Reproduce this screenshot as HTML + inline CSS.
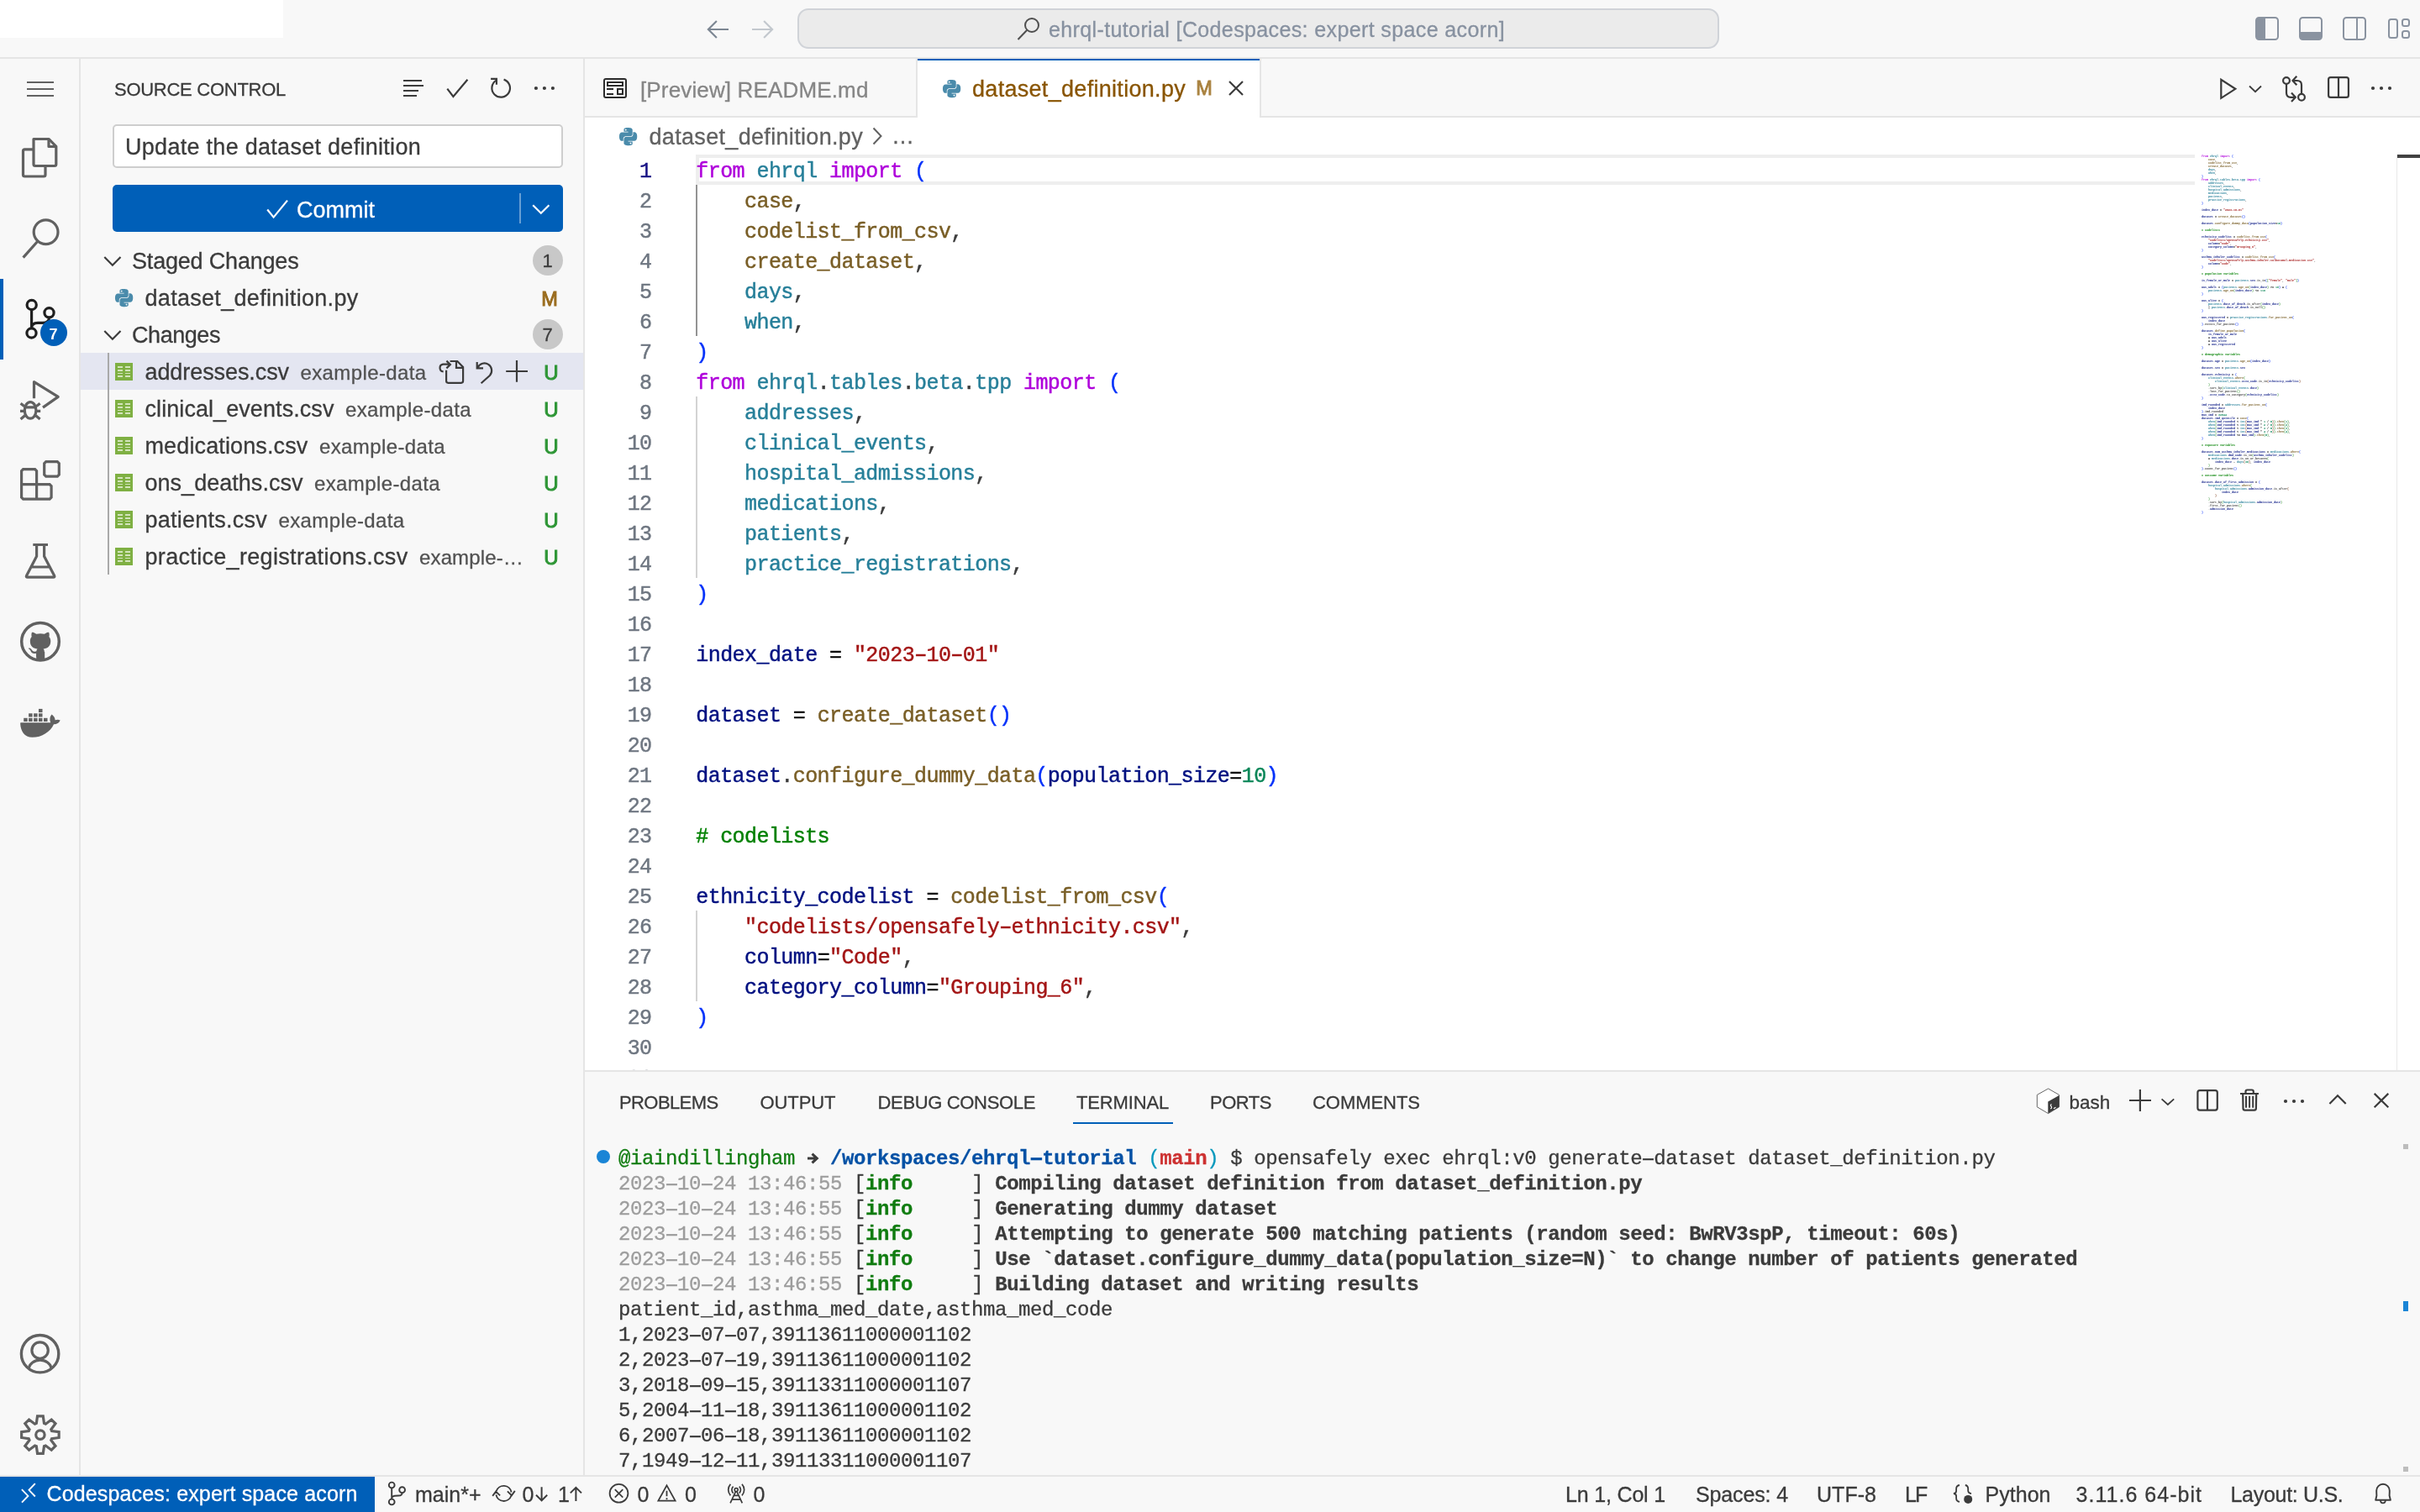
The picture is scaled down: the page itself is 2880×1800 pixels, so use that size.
<!DOCTYPE html>
<html><head><meta charset="utf-8"><title>dataset_definition.py - ehrql-tutorial</title>
<style>
html,body{margin:0;padding:0}
body{width:2880px;height:1800px;position:relative;overflow:hidden;background:#f8f8f8;font-family:'Liberation Sans', sans-serif;-webkit-font-smoothing:antialiased;will-change:transform}
svg{overflow:visible}
.hy{display:inline-block;transform:scaleX(1.6)}
.ht{display:inline-block;transform:scaleX(1.9)}
</style></head><body>
<div style="position:absolute;left:0px;top:0px;width:2880px;height:68px;background:#f8f8f8;"></div><div style="position:absolute;left:0px;top:0px;width:337px;height:45px;background:#ffffff;"></div><div style="position:absolute;left:0px;top:68px;width:2880px;height:2px;background:#e5e5e5;"></div><div style="position:absolute;left:94px;top:70px;width:2px;height:1686px;background:#e5e5e5;"></div><div style="position:absolute;left:694px;top:70px;width:2px;height:1686px;background:#e5e5e5;"></div><div style="position:absolute;left:696px;top:70px;width:2184px;height:68px;background:#f8f8f8;"></div><div style="position:absolute;left:696px;top:138px;width:2184px;height:2px;background:#e5e5e5;"></div><div style="position:absolute;left:696px;top:140px;width:2184px;height:1134px;background:#ffffff;"></div><div style="position:absolute;left:696px;top:1274px;width:2184px;height:2px;background:#e5e5e5;"></div><div style="position:absolute;left:696px;top:1276px;width:2184px;height:480px;background:#f8f8f8;"></div><div style="position:absolute;left:0px;top:1756px;width:2880px;height:2px;background:#e5e5e5;"></div><div style="position:absolute;left:0px;top:1758px;width:2880px;height:42px;background:#f8f8f8;"></div><div style="position:absolute;left:0px;top:1758px;width:446px;height:42px;background:#005fb8;"></div><svg style="position:absolute;left:0px;top:0px;" width="1" height="1" viewBox="0 0 1 1"><path d="M867 35H843.5M852.9 25L842.9 35L852.9 45" fill="none" stroke="#7d8793" stroke-width="2.2"/></svg><svg style="position:absolute;left:0px;top:0px;" width="1" height="1" viewBox="0 0 1 1"><path d="M895 35H918.5M909.1 25L919.1 35L909.1 45" fill="none" stroke="#c3c8ce" stroke-width="2.2"/></svg><div style="position:absolute;left:949px;top:10px;width:1093px;height:44px;border:2px solid #d0d3d8;border-radius:13px;background:#ebebeb"></div><svg style="position:absolute;left:1209px;top:18.5px;" width="30" height="30" viewBox="0 0 30 30"><circle cx="19" cy="11" r="8" fill="none" stroke="#4f4f4f" stroke-width="2"/><path d="M13.3 16.7L2.5 28" stroke="#4f4f4f" stroke-width="2" fill="none"/></svg><span style="position:absolute;left:1248px;top:22.84px;font:400 25px/25px 'Liberation Sans', sans-serif;color:#8791a0;white-space:pre;letter-spacing:0.377px;-webkit-text-stroke:0.3px;">ehrql-tutorial [Codespaces: expert space acorn]</span><svg style="position:absolute;left:2684px;top:20px;" width="28" height="28" viewBox="0 0 28 28"><rect x="1" y="1" width="26" height="26" rx="3.5" fill="none" stroke="#8a93a0" stroke-width="2"/><path d="M1 4.5Q1 1 4.5 1H12V27H4.5Q1 27 1 23.5Z" fill="#8a93a0"/></svg><svg style="position:absolute;left:2736px;top:20px;" width="28" height="28" viewBox="0 0 28 28"><rect x="1" y="1" width="26" height="26" rx="3.5" fill="none" stroke="#8a93a0" stroke-width="2"/><path d="M1 18H27V23.5Q27 27 23.5 27H4.5Q1 27 1 23.5Z" fill="#8a93a0"/></svg><svg style="position:absolute;left:2788px;top:20px;" width="28" height="28" viewBox="0 0 28 28"><rect x="1" y="1" width="26" height="26" rx="3.5" fill="none" stroke="#8a93a0" stroke-width="2"/><path d="M17 1V27" stroke="#8a93a0" stroke-width="2"/></svg><svg style="position:absolute;left:2842px;top:22px;" width="26" height="24" viewBox="0 0 26 24"><rect x="1" y="1" width="10" height="22" rx="2.5" fill="none" stroke="#8a93a0" stroke-width="2"/><rect x="17" y="1" width="8" height="8" rx="2.5" fill="none" stroke="#8a93a0" stroke-width="2"/><rect x="17" y="15" width="8" height="8" rx="2.5" fill="none" stroke="#8a93a0" stroke-width="2"/></svg><div style="position:absolute;left:32px;top:97px;width:32px;height:2px;background:#616161;"></div><div style="position:absolute;left:32px;top:105px;width:32px;height:2px;background:#616161;"></div><div style="position:absolute;left:32px;top:113px;width:32px;height:2px;background:#616161;"></div><svg style="position:absolute;left:0px;top:0px;" width="96" height="1800" viewBox="0 0 96 1800"><path d="M40 165.5H58.2L66.8 174.3V195.5Q66.8 197.5 64.8 197.5H42Q40 197.5 40 195.5Z" fill="none" stroke="#616161" stroke-width="3.2" stroke-linejoin="round" stroke-linecap="butt"/><path d="M58 165.5V174.5H66.8" fill="none" stroke="#616161" stroke-width="3.2" stroke-linejoin="round" stroke-linecap="butt"/><path d="M40 177.8H29.5Q27.5 177.8 27.5 179.8V208Q27.5 210 29.5 210H52Q54 210 54 208V198" fill="none" stroke="#616161" stroke-width="3.2" stroke-linejoin="round" stroke-linecap="butt"/><circle cx="54.6" cy="276.3" r="14.4" fill="none" stroke="#616161" stroke-width="3.2" stroke-linejoin="round" stroke-linecap="butt"/><path d="M44.8 287.2L27.6 306.6" fill="none" stroke="#616161" stroke-width="3.2" stroke-linejoin="round" stroke-linecap="butt"/><circle cx="37.7" cy="363" r="5.6" fill="none" stroke="#1f1f1f" stroke-width="3.2" stroke-linejoin="round" stroke-linecap="butt"/><circle cx="58.5" cy="372.3" r="5.6" fill="none" stroke="#1f1f1f" stroke-width="3.2" stroke-linejoin="round" stroke-linecap="butt"/><circle cx="37.5" cy="396.5" r="5.6" fill="none" stroke="#1f1f1f" stroke-width="3.2" stroke-linejoin="round" stroke-linecap="butt"/><path d="M37.6 368.6V390.9M58.5 377.9Q58.5 384.3 51 384.3H45Q37.6 384.3 37.6 390.5" fill="none" stroke="#1f1f1f" stroke-width="3.2" stroke-linejoin="round" stroke-linecap="butt"/><path d="M40.5 474.3V454.6L69.2 472.4L51 485.1" fill="none" stroke="#616161" stroke-width="3.2" stroke-linejoin="round" stroke-linecap="butt"/><ellipse cx="36.1" cy="488.4" rx="6.8" ry="9.8" fill="none" stroke="#616161" stroke-width="3.2" stroke-linejoin="round" stroke-linecap="butt"/><path d="M28.5 484.9H43.7M24.6 480.2L28.7 483.5M47.6 480.2L43.5 483.5M24 489.4H28.8M48.2 489.4H43.4M24.6 498.9L29.6 494.7M47.6 498.9L42.6 494.7" fill="none" stroke="#616161" stroke-width="3.2" stroke-linejoin="round" stroke-linecap="butt"/><path d="M25.6 576.7V560.6L27.6 558.6H41.6L43.6 560.6V576.7H59.1L61.1 578.7V592.2L59.1 594.2H27.6L25.6 592.2ZM25.6 576.7H43.6V594.2" fill="none" stroke="#616161" stroke-width="3.2" stroke-linejoin="miter" stroke-linecap="butt"/><path d="M54.7 549.7H68.3L70.3 551.7V565.1L68.3 567.1H54.7L52.7 565.1V551.7Z" fill="none" stroke="#616161" stroke-width="3.2" stroke-linejoin="miter" stroke-linecap="butt"/><path d="M39.3 648.5H57M43.6 649V662.2L31.6 685.2Q30.6 687.2 32.8 687.2H63.4Q65.6 687.2 64.6 685.2L52.6 662.2V649M37.5 675H58.7" fill="none" stroke="#616161" stroke-width="3.2" stroke-linejoin="round" stroke-linecap="butt"/><circle cx="48" cy="763.8" r="22.3" fill="none" stroke="#616161" stroke-width="3.5" stroke-linejoin="round" stroke-linecap="butt"/><g transform="translate(28.8 744.9) scale(2.4)" fill="#616161"><path d="M5.47 15.59c.4.07.55-.17.55-.38 0-.19-.01-.82-.01-1.49-2.01.37-2.53-.49-2.69-.94-.09-.23-.48-.94-.82-1.13-.28-.15-.68-.52-.01-.53.63-.01 1.08.58 1.23.82.72 1.21 1.87.87 2.33.66.07-.52.28-.87.51-1.07-1.78-.2-3.64-.89-3.64-3.95 0-.87.31-1.59.82-2.15-.08-.2-.36-1.02.08-2.12 0 0 .67-.21 2.2.82.64-.18 1.32-.27 2-.27.68 0 1.36.09 2 .27 1.53-1.04 2.2-.82 2.2-.82.44 1.1.16 1.92.08 2.12.51.56.82 1.27.82 2.15 0 3.07-1.87 3.75-3.65 3.95.29.25.54.73.54 1.48 0 1.07-.01 1.93-.01 2.2 0 .21.15.46.55.38z"/></g><rect x="43.2" y="776" width="10" height="11" fill="#616161"/><path d="M24.6 860.3H60.2Q58 855 61.5 850.6Q65.4 853.4 65.6 857.2Q69 856 71.7 857.4Q69.5 862.2 64 862.2C60 871 50 877.8 38.5 877.8C29 877.8 24.6 870 24.2 862Q24.1 860.3 24.6 860.3Z" fill="#616161"/><rect x="28.2" y="854.8" width="4.5" height="4.2" fill="#616161"/><rect x="34.1" y="854.8" width="4.5" height="4.2" fill="#616161"/><rect x="40.1" y="854.8" width="4.5" height="4.2" fill="#616161"/><rect x="46" y="854.8" width="4.5" height="4.2" fill="#616161"/><rect x="52" y="854.8" width="4.5" height="4.2" fill="#616161"/><rect x="34.1" y="849.3" width="4.5" height="4.2" fill="#616161"/><rect x="40.1" y="849.3" width="4.5" height="4.2" fill="#616161"/><rect x="46" y="849.3" width="4.5" height="4.2" fill="#616161"/><rect x="46" y="843.9" width="4.5" height="4.2" fill="#616161"/><circle cx="47.6" cy="1611.7" r="22.2" fill="none" stroke="#616161" stroke-width="3.4" stroke-linejoin="round" stroke-linecap="butt"/><circle cx="47.6" cy="1607.6" r="9.7" fill="none" stroke="#616161" stroke-width="3.2" stroke-linejoin="round" stroke-linecap="butt"/><path d="M34.3 1629A13.5 11.2 0 0 1 61.1 1629" fill="none" stroke="#616161" stroke-width="3.2" stroke-linejoin="round" stroke-linecap="butt"/></svg><div style="position:absolute;left:48px;top:380px;width:32px;height:32px;border-radius:16px;background:#005fb8"></div><span style="position:absolute;left:58.5px;top:388.76px;font:700 18px/18px 'Liberation Sans', sans-serif;color:#ffffff;white-space:pre;letter-spacing:0.984px;-webkit-text-stroke:0px;">7</span><svg style="position:absolute;left:0px;top:0px;" width="96" height="1800" viewBox="0 0 96 1800"><path d="M43.30 1694.45L44.54 1685.85L51.26 1685.85L52.50 1694.45L54.30 1695.20L61.25 1689.99L66.01 1694.75L60.80 1701.70L61.55 1703.50L70.15 1704.74L70.15 1711.46L61.55 1712.70L60.80 1714.50L66.01 1721.45L61.25 1726.21L54.30 1721.00L52.50 1721.75L51.26 1730.35L44.54 1730.35L43.30 1721.75L41.50 1721.00L34.55 1726.21L29.79 1721.45L35.00 1714.50L34.25 1712.70L25.65 1711.46L25.65 1704.74L34.25 1703.50L35.00 1701.70L29.79 1694.75L34.55 1689.99L41.50 1695.20Z" fill="none" stroke="#616161" stroke-width="3.2" stroke-linejoin="miter" stroke-linecap="butt"/><circle cx="47.9" cy="1708.1" r="5.2" fill="none" stroke="#616161" stroke-width="3.2" stroke-linejoin="round" stroke-linecap="butt"/></svg><div style="position:absolute;left:0px;top:332px;width:4px;height:96px;background:#005fb8;"></div><span style="position:absolute;left:136px;top:96.38px;font:400 22px/22px 'Liberation Sans', sans-serif;color:#3b3b3b;white-space:pre;letter-spacing:-0.271px;-webkit-text-stroke:0.3px;">SOURCE CONTROL</span><div style="position:absolute;left:134px;top:148px;width:532px;height:48px;border:2px solid #cecece;border-radius:5px;background:#fff"></div><span style="position:absolute;left:149px;top:161.64px;font:400 27px/27px 'Liberation Sans', sans-serif;color:#3b3b3b;white-space:pre;letter-spacing:0.284px;-webkit-text-stroke:0.3px;">Update the dataset definition</span><div style="position:absolute;left:134px;top:220px;width:536px;height:56px;border-radius:5px;background:#005fb8"></div><div style="position:absolute;left:618px;top:230px;width:2px;height:36px;background:rgba(255,255,255,0.4);"></div><span style="position:absolute;left:353px;top:236.64px;font:400 27px/27px 'Liberation Sans', sans-serif;color:#ffffff;white-space:pre;letter-spacing:0.000px;-webkit-text-stroke:0.3px;">Commit</span><span style="position:absolute;left:157px;top:297.64px;font:400 27px/27px 'Liberation Sans', sans-serif;color:#3b3b3b;white-space:pre;letter-spacing:-0.190px;-webkit-text-stroke:0.3px;">Staged Changes</span><span style="position:absolute;left:172.5px;top:341.64px;font:400 27px/27px 'Liberation Sans', sans-serif;color:#3b3b3b;white-space:pre;letter-spacing:0.301px;-webkit-text-stroke:0.3px;">dataset_definition.py</span><span style="position:absolute;left:157px;top:385.64px;font:400 27px/27px 'Liberation Sans', sans-serif;color:#3b3b3b;white-space:pre;letter-spacing:-0.442px;-webkit-text-stroke:0.3px;">Changes</span><div style="position:absolute;left:96px;top:420px;width:598px;height:44px;background:#e4e6f1;"></div><div style="position:absolute;left:128px;top:420px;width:2px;height:264px;background:#a9a9a9;"></div><span style="position:absolute;left:172.5px;top:429.64px;font:400 27px/27px 'Liberation Sans', sans-serif;color:#3b3b3b;white-space:pre;letter-spacing:-0.083px;-webkit-text-stroke:0.3px;">addresses.csv</span><span style="position:absolute;left:357.5px;top:432.18px;font:400 24px/24px 'Liberation Sans', sans-serif;color:#525252;white-space:pre;letter-spacing:0.382px;-webkit-text-stroke:0.3px;">example-data</span><span style="position:absolute;left:647.3px;top:432.18px;font:400 24px/24px 'Liberation Sans', sans-serif;color:#2e9636;white-space:pre;letter-spacing:-1.844px;-webkit-text-stroke:0.3px;-webkit-text-stroke:1px #2e9636;">U</span><span style="position:absolute;left:172.5px;top:473.64px;font:400 27px/27px 'Liberation Sans', sans-serif;color:#3b3b3b;white-space:pre;letter-spacing:0.074px;-webkit-text-stroke:0.3px;">clinical_events.csv</span><span style="position:absolute;left:411.0px;top:476.18px;font:400 24px/24px 'Liberation Sans', sans-serif;color:#525252;white-space:pre;letter-spacing:0.382px;-webkit-text-stroke:0.3px;">example-data</span><span style="position:absolute;left:647.3px;top:476.18px;font:400 24px/24px 'Liberation Sans', sans-serif;color:#2e9636;white-space:pre;letter-spacing:-1.844px;-webkit-text-stroke:0.3px;-webkit-text-stroke:1px #2e9636;">U</span><span style="position:absolute;left:172.5px;top:517.64px;font:400 27px/27px 'Liberation Sans', sans-serif;color:#3b3b3b;white-space:pre;letter-spacing:0.128px;-webkit-text-stroke:0.3px;">medications.csv</span><span style="position:absolute;left:380.0px;top:520.18px;font:400 24px/24px 'Liberation Sans', sans-serif;color:#525252;white-space:pre;letter-spacing:0.382px;-webkit-text-stroke:0.3px;">example-data</span><span style="position:absolute;left:647.3px;top:520.18px;font:400 24px/24px 'Liberation Sans', sans-serif;color:#2e9636;white-space:pre;letter-spacing:-1.844px;-webkit-text-stroke:0.3px;-webkit-text-stroke:1px #2e9636;">U</span><span style="position:absolute;left:172.5px;top:561.64px;font:400 27px/27px 'Liberation Sans', sans-serif;color:#3b3b3b;white-space:pre;letter-spacing:0.027px;-webkit-text-stroke:0.3px;">ons_deaths.csv</span><span style="position:absolute;left:374.0px;top:564.18px;font:400 24px/24px 'Liberation Sans', sans-serif;color:#525252;white-space:pre;letter-spacing:0.382px;-webkit-text-stroke:0.3px;">example-data</span><span style="position:absolute;left:647.3px;top:564.18px;font:400 24px/24px 'Liberation Sans', sans-serif;color:#2e9636;white-space:pre;letter-spacing:-1.844px;-webkit-text-stroke:0.3px;-webkit-text-stroke:1px #2e9636;">U</span><span style="position:absolute;left:172.5px;top:605.64px;font:400 27px/27px 'Liberation Sans', sans-serif;color:#3b3b3b;white-space:pre;letter-spacing:0.243px;-webkit-text-stroke:0.3px;">patients.csv</span><span style="position:absolute;left:331.5px;top:608.18px;font:400 24px/24px 'Liberation Sans', sans-serif;color:#525252;white-space:pre;letter-spacing:0.382px;-webkit-text-stroke:0.3px;">example-data</span><span style="position:absolute;left:647.3px;top:608.18px;font:400 24px/24px 'Liberation Sans', sans-serif;color:#2e9636;white-space:pre;letter-spacing:-1.844px;-webkit-text-stroke:0.3px;-webkit-text-stroke:1px #2e9636;">U</span><span style="position:absolute;left:172.5px;top:649.64px;font:400 27px/27px 'Liberation Sans', sans-serif;color:#3b3b3b;white-space:pre;letter-spacing:0.322px;-webkit-text-stroke:0.3px;">practice_registrations.csv</span><span style="position:absolute;left:499.0px;top:652.18px;font:400 24px/24px 'Liberation Sans', sans-serif;color:#525252;white-space:pre;letter-spacing:0.142px;-webkit-text-stroke:0.3px;">example-…</span><span style="position:absolute;left:647.3px;top:652.18px;font:400 24px/24px 'Liberation Sans', sans-serif;color:#2e9636;white-space:pre;letter-spacing:-1.844px;-webkit-text-stroke:0.3px;-webkit-text-stroke:1px #2e9636;">U</span><span style="position:absolute;left:644.3px;top:344.61px;font:400 23.5px/23.5px 'Liberation Sans', sans-serif;color:#9a6c1e;white-space:pre;letter-spacing:-1.078px;-webkit-text-stroke:0.3px;-webkit-text-stroke:1px #9a6c1e;">M</span><div style="position:absolute;left:634px;top:292px;width:36px;height:36px;border-radius:18px;background:#c8c8c8"></div><span style="position:absolute;left:645.5px;top:300.38px;font:400 22px/22px 'Liberation Sans', sans-serif;color:#3b3b3b;white-space:pre;letter-spacing:0.750px;-webkit-text-stroke:0.3px;">1</span><div style="position:absolute;left:634px;top:380px;width:36px;height:36px;border-radius:18px;background:#c8c8c8"></div><span style="position:absolute;left:645.5px;top:388.38px;font:400 22px/22px 'Liberation Sans', sans-serif;color:#3b3b3b;white-space:pre;letter-spacing:0.750px;-webkit-text-stroke:0.3px;">7</span><svg style="position:absolute;left:0px;top:0px;" width="1" height="1" viewBox="0 0 1 1"><path d="M480 96H502M480 102H504M480 108H498M480 114H496" fill="none" stroke="#3b3b3b" stroke-width="2.2" stroke-linejoin="miter" stroke-linecap="butt"/><path d="M532.3 105.7L539.4 115L556.4 94.8" fill="none" stroke="#3b3b3b" stroke-width="2.2" stroke-linejoin="miter" stroke-linecap="butt"/><path d="M599.6 94.6A10.8 10.8 0 1 1 590.6 95.6" fill="none" stroke="#3b3b3b" stroke-width="2.2" stroke-linejoin="miter" stroke-linecap="butt"/><path d="M584.1 93.9H590.9V100.7" fill="none" stroke="#3b3b3b" stroke-width="2.2" stroke-linejoin="miter" stroke-linecap="butt"/></svg><svg style="position:absolute;left:0px;top:0px;" width="1" height="1" viewBox="0 0 1 1"><circle cx="637.9" cy="105" r="2.1" fill="#3b3b3b"/><circle cx="647.9" cy="105" r="2.1" fill="#3b3b3b"/><circle cx="657.9" cy="105" r="2.1" fill="#3b3b3b"/></svg><svg style="position:absolute;left:0px;top:0px;" width="1" height="1" viewBox="0 0 1 1"><path d="M318.2 249.5L325.6 258.6L342 238.6" fill="none" stroke="#fff" stroke-width="2.2" stroke-linejoin="miter" stroke-linecap="butt"/></svg><svg style="position:absolute;left:0px;top:0px;" width="1" height="1" viewBox="0 0 1 1"><path d="M634.1999999999999 244.2L643.8 253.8L653.4 244.2" fill="none" stroke="#fff" stroke-width="2.2" stroke-linejoin="miter" stroke-linecap="butt"/></svg><svg style="position:absolute;left:0px;top:0px;" width="1" height="1" viewBox="0 0 1 1"><path d="M124.30000000000001 305.95L133.9 315.65000000000003L143.5 305.95" fill="none" stroke="#3b3b3b" stroke-width="2.2" stroke-linejoin="miter" stroke-linecap="butt"/></svg><svg style="position:absolute;left:0px;top:0px;" width="1" height="1" viewBox="0 0 1 1"><path d="M124.30000000000001 393.95L133.9 403.65000000000003L143.5 393.95" fill="none" stroke="#3b3b3b" stroke-width="2.2" stroke-linejoin="miter" stroke-linecap="butt"/></svg><svg style="position:absolute;left:137px;top:344px" width="21.2" height="21.2" viewBox="0 0 24 24"><path d="M14.25.18l.9.2.73.26.59.3.45.32.34.34.25.34.16.33.1.3.04.26.02.2-.01.13V8.5l-.05.63-.13.55-.21.46-.26.38-.3.31-.33.25-.35.19-.35.14-.33.1-.3.07-.26.04-.21.02H8.77l-.69.05-.59.14-.5.22-.41.27-.33.32-.27.35-.2.36-.15.37-.1.35-.07.32-.04.27-.02.21v3.06H3.17l-.21-.03-.28-.07-.32-.12-.35-.18-.36-.26-.36-.36-.35-.46-.32-.59-.28-.73-.21-.88-.14-1.05-.05-1.23.06-1.22.16-1.04.24-.87.32-.71.36-.57.4-.44.42-.33.42-.24.4-.16.36-.1.32-.05.24-.01h.16l.06.01h8.16v-.83H6.18l-.01-2.75-.02-.37.05-.34.11-.31.17-.28.25-.26.31-.23.38-.2.44-.18.51-.15.58-.12.64-.1.71-.06.77-.04.84-.02 1.27.05zm-6.3 1.98l-.23.33-.08.41.08.41.23.34.33.22.41.09.41-.09.33-.22.23-.34.08-.41-.08-.41-.23-.33-.33-.22-.41-.09-.41.09zm13.09 3.95l.28.06.32.12.35.18.36.27.36.35.35.47.32.59.28.73.21.88.14 1.04.05 1.23-.06 1.23-.16 1.04-.24.86-.32.71-.36.57-.4.45-.42.33-.42.24-.4.16-.36.09-.32.05-.24.02-.16-.01h-8.22v.82h5.84l.01 2.76.02.36-.05.34-.11.31-.17.29-.25.25-.31.24-.38.2-.44.17-.51.15-.58.13-.64.09-.71.07-.77.04-.84.01-1.27-.04-1.07-.14-.9-.2-.73-.25-.59-.3-.45-.33-.34-.34-.25-.34-.16-.33-.1-.3-.04-.25-.02-.2.01-.13v-5.34l.05-.64.13-.54.21-.46.26-.38.3-.32.33-.24.35-.2.35-.14.33-.1.3-.06.26-.04.21-.02.13-.01h5.84l.69-.05.59-.14.5-.21.41-.28.33-.32.27-.35.2-.36.15-.36.1-.35.07-.32.04-.28.02-.21V6.07h2.09l.14.01zm-6.47 14.25l-.23.33-.08.41.08.41.23.33.33.23.41.08.41-.08.33-.23.23-.33.08-.41-.08-.41-.23-.33-.33-.23-.41-.08-.41.08z" fill="#4a8bab"/></svg><div style="position:absolute;left:136.7px;top:432px;width:21.7px;height:21.2px;background:#7fb043;"></div><div style="position:absolute;left:140.1px;top:436.3px;width:6px;height:1.9px;background:#d2e4ba;"></div><div style="position:absolute;left:149px;top:436.3px;width:6.1px;height:1.9px;background:#d2e4ba;"></div><div style="position:absolute;left:140.1px;top:439.95px;width:6px;height:1.9px;background:#d2e4ba;"></div><div style="position:absolute;left:149px;top:439.95px;width:6.1px;height:1.9px;background:#d2e4ba;"></div><div style="position:absolute;left:140.1px;top:443.6px;width:6px;height:1.9px;background:#d2e4ba;"></div><div style="position:absolute;left:149px;top:443.6px;width:6.1px;height:1.9px;background:#d2e4ba;"></div><div style="position:absolute;left:140.1px;top:447.25px;width:6px;height:1.9px;background:#d2e4ba;"></div><div style="position:absolute;left:149px;top:447.25px;width:6.1px;height:1.9px;background:#d2e4ba;"></div><div style="position:absolute;left:136.7px;top:476px;width:21.7px;height:21.2px;background:#7fb043;"></div><div style="position:absolute;left:140.1px;top:480.3px;width:6px;height:1.9px;background:#d2e4ba;"></div><div style="position:absolute;left:149px;top:480.3px;width:6.1px;height:1.9px;background:#d2e4ba;"></div><div style="position:absolute;left:140.1px;top:483.95px;width:6px;height:1.9px;background:#d2e4ba;"></div><div style="position:absolute;left:149px;top:483.95px;width:6.1px;height:1.9px;background:#d2e4ba;"></div><div style="position:absolute;left:140.1px;top:487.6px;width:6px;height:1.9px;background:#d2e4ba;"></div><div style="position:absolute;left:149px;top:487.6px;width:6.1px;height:1.9px;background:#d2e4ba;"></div><div style="position:absolute;left:140.1px;top:491.25px;width:6px;height:1.9px;background:#d2e4ba;"></div><div style="position:absolute;left:149px;top:491.25px;width:6.1px;height:1.9px;background:#d2e4ba;"></div><div style="position:absolute;left:136.7px;top:520px;width:21.7px;height:21.2px;background:#7fb043;"></div><div style="position:absolute;left:140.1px;top:524.3px;width:6px;height:1.9px;background:#d2e4ba;"></div><div style="position:absolute;left:149px;top:524.3px;width:6.1px;height:1.9px;background:#d2e4ba;"></div><div style="position:absolute;left:140.1px;top:527.9499999999999px;width:6px;height:1.9px;background:#d2e4ba;"></div><div style="position:absolute;left:149px;top:527.9499999999999px;width:6.1px;height:1.9px;background:#d2e4ba;"></div><div style="position:absolute;left:140.1px;top:531.5999999999999px;width:6px;height:1.9px;background:#d2e4ba;"></div><div style="position:absolute;left:149px;top:531.5999999999999px;width:6.1px;height:1.9px;background:#d2e4ba;"></div><div style="position:absolute;left:140.1px;top:535.25px;width:6px;height:1.9px;background:#d2e4ba;"></div><div style="position:absolute;left:149px;top:535.25px;width:6.1px;height:1.9px;background:#d2e4ba;"></div><div style="position:absolute;left:136.7px;top:564px;width:21.7px;height:21.2px;background:#7fb043;"></div><div style="position:absolute;left:140.1px;top:568.3px;width:6px;height:1.9px;background:#d2e4ba;"></div><div style="position:absolute;left:149px;top:568.3px;width:6.1px;height:1.9px;background:#d2e4ba;"></div><div style="position:absolute;left:140.1px;top:571.9499999999999px;width:6px;height:1.9px;background:#d2e4ba;"></div><div style="position:absolute;left:149px;top:571.9499999999999px;width:6.1px;height:1.9px;background:#d2e4ba;"></div><div style="position:absolute;left:140.1px;top:575.5999999999999px;width:6px;height:1.9px;background:#d2e4ba;"></div><div style="position:absolute;left:149px;top:575.5999999999999px;width:6.1px;height:1.9px;background:#d2e4ba;"></div><div style="position:absolute;left:140.1px;top:579.25px;width:6px;height:1.9px;background:#d2e4ba;"></div><div style="position:absolute;left:149px;top:579.25px;width:6.1px;height:1.9px;background:#d2e4ba;"></div><div style="position:absolute;left:136.7px;top:608px;width:21.7px;height:21.2px;background:#7fb043;"></div><div style="position:absolute;left:140.1px;top:612.3px;width:6px;height:1.9px;background:#d2e4ba;"></div><div style="position:absolute;left:149px;top:612.3px;width:6.1px;height:1.9px;background:#d2e4ba;"></div><div style="position:absolute;left:140.1px;top:615.9499999999999px;width:6px;height:1.9px;background:#d2e4ba;"></div><div style="position:absolute;left:149px;top:615.9499999999999px;width:6.1px;height:1.9px;background:#d2e4ba;"></div><div style="position:absolute;left:140.1px;top:619.5999999999999px;width:6px;height:1.9px;background:#d2e4ba;"></div><div style="position:absolute;left:149px;top:619.5999999999999px;width:6.1px;height:1.9px;background:#d2e4ba;"></div><div style="position:absolute;left:140.1px;top:623.25px;width:6px;height:1.9px;background:#d2e4ba;"></div><div style="position:absolute;left:149px;top:623.25px;width:6.1px;height:1.9px;background:#d2e4ba;"></div><div style="position:absolute;left:136.7px;top:652px;width:21.7px;height:21.2px;background:#7fb043;"></div><div style="position:absolute;left:140.1px;top:656.3px;width:6px;height:1.9px;background:#d2e4ba;"></div><div style="position:absolute;left:149px;top:656.3px;width:6.1px;height:1.9px;background:#d2e4ba;"></div><div style="position:absolute;left:140.1px;top:659.9499999999999px;width:6px;height:1.9px;background:#d2e4ba;"></div><div style="position:absolute;left:149px;top:659.9499999999999px;width:6.1px;height:1.9px;background:#d2e4ba;"></div><div style="position:absolute;left:140.1px;top:663.5999999999999px;width:6px;height:1.9px;background:#d2e4ba;"></div><div style="position:absolute;left:149px;top:663.5999999999999px;width:6.1px;height:1.9px;background:#d2e4ba;"></div><div style="position:absolute;left:140.1px;top:667.25px;width:6px;height:1.9px;background:#d2e4ba;"></div><div style="position:absolute;left:149px;top:667.25px;width:6.1px;height:1.9px;background:#d2e4ba;"></div><svg style="position:absolute;left:0px;top:0px;" width="1" height="1" viewBox="0 0 1 1"><path d="M531.1 440.7V453.6Q531.1 455.8 533.3 455.8H548.9Q551.1 455.8 551.1 453.6V436.9L544.3 430H535.6M543 430.4V437.9H551.1" fill="none" stroke="#3b3b3b" stroke-width="2.2" stroke-linejoin="miter" stroke-linecap="butt"/><path d="M527.6 442.4A4.5 4.4 0 0 1 527.2 433.7H535.6M531.4 429.6L535.9 433.9L531.4 438.4" fill="none" stroke="#3b3b3b" stroke-width="2.2" stroke-linejoin="miter" stroke-linecap="butt"/><path d="M567.7 431.1V438.4H575M568.6 437.4A8.7 8.7 0 1 1 582.9 447L572.6 456.2" fill="none" stroke="#3b3b3b" stroke-width="2.2" stroke-linejoin="miter" stroke-linecap="butt"/><path d="M615 429.1V454.8M602.2 442H628" fill="none" stroke="#3b3b3b" stroke-width="2.2" stroke-linejoin="miter" stroke-linecap="butt"/></svg><div style="position:absolute;left:1090px;top:70px;width:2px;height:68px;background:#e5e5e5;"></div><div style="position:absolute;left:1092px;top:70px;width:407px;height:70px;background:#ffffff;"></div><div style="position:absolute;left:1092px;top:70px;width:407px;height:2px;background:#005fb8;"></div><div style="position:absolute;left:1499px;top:70px;width:2px;height:68px;background:#e5e5e5;"></div><span style="position:absolute;left:762px;top:93.99px;font:400 26px/26px 'Liberation Sans', sans-serif;color:#868686;white-space:pre;letter-spacing:0.146px;-webkit-text-stroke:0.3px;">[Preview] README.md</span><span style="position:absolute;left:1157px;top:93.14px;font:400 27px/27px 'Liberation Sans', sans-serif;color:#895503;white-space:pre;letter-spacing:0.301px;-webkit-text-stroke:0.3px;">dataset_definition.py</span><span style="position:absolute;left:1423.2px;top:93.91px;font:400 23.5px/23.5px 'Liberation Sans', sans-serif;color:#a9823f;white-space:pre;letter-spacing:-1.078px;-webkit-text-stroke:0.3px;-webkit-text-stroke:0.9px #a9823f;">M</span><span style="position:absolute;left:772.5px;top:149.64px;font:400 27px/27px 'Liberation Sans', sans-serif;color:#616161;white-space:pre;letter-spacing:0.324px;-webkit-text-stroke:0.3px;">dataset_definition.py</span><span style="position:absolute;left:1061px;top:149.14px;font:400 27px/27px 'Liberation Sans', sans-serif;color:#616161;white-space:pre;letter-spacing:-9.000px;-webkit-text-stroke:0.3px;">…</span><div style="position:absolute;left:828px;top:184px;width:1780px;height:28px;border:4px solid #eeeeee;border-right:0"></div><div style="position:absolute;left:828px;top:220px;width:2px;height:180px;background:#939393;"></div><div style="position:absolute;left:828px;top:472px;width:2px;height:216px;background:#d3d3d3;"></div><div style="position:absolute;left:828px;top:1084px;width:2px;height:108px;background:#d3d3d3;"></div><div style="position:absolute;left:696px;top:184px;width:1916px;height:1090px;overflow:hidden;font:400 25px/36px 'Liberation Mono', monospace;letter-spacing:-0.572px;white-space:pre;-webkit-text-stroke:0.45px"><div style="position:absolute;left:0;top:3.33px;width:79.5px;text-align:right;color:#171184;height:36px">1</div><div style="position:absolute;left:132.3px;top:3.33px;height:36px"><span style="color:#af00db">from</span> <span style="color:#267f99">ehrql</span> <span style="color:#af00db">import</span> <span style="color:#0431fa">(</span></div><div style="position:absolute;left:0;top:39.33px;width:79.5px;text-align:right;color:#6e7681;height:36px">2</div><div style="position:absolute;left:132.3px;top:39.33px;height:36px">    <span style="color:#795e26">case</span><span style="color:#3b3b3b">,</span></div><div style="position:absolute;left:0;top:75.33px;width:79.5px;text-align:right;color:#6e7681;height:36px">3</div><div style="position:absolute;left:132.3px;top:75.33px;height:36px">    <span style="color:#795e26">codelist_from_csv</span><span style="color:#3b3b3b">,</span></div><div style="position:absolute;left:0;top:111.33px;width:79.5px;text-align:right;color:#6e7681;height:36px">4</div><div style="position:absolute;left:132.3px;top:111.33px;height:36px">    <span style="color:#795e26">create_dataset</span><span style="color:#3b3b3b">,</span></div><div style="position:absolute;left:0;top:147.33px;width:79.5px;text-align:right;color:#6e7681;height:36px">5</div><div style="position:absolute;left:132.3px;top:147.33px;height:36px">    <span style="color:#267f99">days</span><span style="color:#3b3b3b">,</span></div><div style="position:absolute;left:0;top:183.33px;width:79.5px;text-align:right;color:#6e7681;height:36px">6</div><div style="position:absolute;left:132.3px;top:183.33px;height:36px">    <span style="color:#267f99">when</span><span style="color:#3b3b3b">,</span></div><div style="position:absolute;left:0;top:219.33px;width:79.5px;text-align:right;color:#6e7681;height:36px">7</div><div style="position:absolute;left:132.3px;top:219.33px;height:36px"><span style="color:#0431fa">)</span></div><div style="position:absolute;left:0;top:255.33px;width:79.5px;text-align:right;color:#6e7681;height:36px">8</div><div style="position:absolute;left:132.3px;top:255.33px;height:36px"><span style="color:#af00db">from</span> <span style="color:#267f99">ehrql</span><span style="color:#3b3b3b">.</span><span style="color:#267f99">tables</span><span style="color:#3b3b3b">.</span><span style="color:#267f99">beta</span><span style="color:#3b3b3b">.</span><span style="color:#267f99">tpp</span> <span style="color:#af00db">import</span> <span style="color:#0431fa">(</span></div><div style="position:absolute;left:0;top:291.33px;width:79.5px;text-align:right;color:#6e7681;height:36px">9</div><div style="position:absolute;left:132.3px;top:291.33px;height:36px">    <span style="color:#267f99">addresses</span><span style="color:#3b3b3b">,</span></div><div style="position:absolute;left:0;top:327.33px;width:79.5px;text-align:right;color:#6e7681;height:36px">10</div><div style="position:absolute;left:132.3px;top:327.33px;height:36px">    <span style="color:#267f99">clinical_events</span><span style="color:#3b3b3b">,</span></div><div style="position:absolute;left:0;top:363.33px;width:79.5px;text-align:right;color:#6e7681;height:36px">11</div><div style="position:absolute;left:132.3px;top:363.33px;height:36px">    <span style="color:#267f99">hospital_admissions</span><span style="color:#3b3b3b">,</span></div><div style="position:absolute;left:0;top:399.33px;width:79.5px;text-align:right;color:#6e7681;height:36px">12</div><div style="position:absolute;left:132.3px;top:399.33px;height:36px">    <span style="color:#267f99">medications</span><span style="color:#3b3b3b">,</span></div><div style="position:absolute;left:0;top:435.33px;width:79.5px;text-align:right;color:#6e7681;height:36px">13</div><div style="position:absolute;left:132.3px;top:435.33px;height:36px">    <span style="color:#267f99">patients</span><span style="color:#3b3b3b">,</span></div><div style="position:absolute;left:0;top:471.33px;width:79.5px;text-align:right;color:#6e7681;height:36px">14</div><div style="position:absolute;left:132.3px;top:471.33px;height:36px">    <span style="color:#267f99">practice_registrations</span><span style="color:#3b3b3b">,</span></div><div style="position:absolute;left:0;top:507.33px;width:79.5px;text-align:right;color:#6e7681;height:36px">15</div><div style="position:absolute;left:132.3px;top:507.33px;height:36px"><span style="color:#0431fa">)</span></div><div style="position:absolute;left:0;top:543.33px;width:79.5px;text-align:right;color:#6e7681;height:36px">16</div><div style="position:absolute;left:132.3px;top:543.33px;height:36px"></div><div style="position:absolute;left:0;top:579.33px;width:79.5px;text-align:right;color:#6e7681;height:36px">17</div><div style="position:absolute;left:132.3px;top:579.33px;height:36px"><span style="color:#001080">index_date</span> <span style="color:#000000">=</span> <span style="color:#a31515">&quot;2023<span class="hy">-</span>10<span class="hy">-</span>01&quot;</span></div><div style="position:absolute;left:0;top:615.33px;width:79.5px;text-align:right;color:#6e7681;height:36px">18</div><div style="position:absolute;left:132.3px;top:615.33px;height:36px"></div><div style="position:absolute;left:0;top:651.33px;width:79.5px;text-align:right;color:#6e7681;height:36px">19</div><div style="position:absolute;left:132.3px;top:651.33px;height:36px"><span style="color:#001080">dataset</span> <span style="color:#000000">=</span> <span style="color:#795e26">create_dataset</span><span style="color:#0431fa">(</span><span style="color:#0431fa">)</span></div><div style="position:absolute;left:0;top:687.33px;width:79.5px;text-align:right;color:#6e7681;height:36px">20</div><div style="position:absolute;left:132.3px;top:687.33px;height:36px"></div><div style="position:absolute;left:0;top:723.33px;width:79.5px;text-align:right;color:#6e7681;height:36px">21</div><div style="position:absolute;left:132.3px;top:723.33px;height:36px"><span style="color:#001080">dataset</span><span style="color:#3b3b3b">.</span><span style="color:#795e26">configure_dummy_data</span><span style="color:#0431fa">(</span><span style="color:#001080">population_size</span><span style="color:#000000">=</span><span style="color:#098658">10</span><span style="color:#0431fa">)</span></div><div style="position:absolute;left:0;top:759.33px;width:79.5px;text-align:right;color:#6e7681;height:36px">22</div><div style="position:absolute;left:132.3px;top:759.33px;height:36px"></div><div style="position:absolute;left:0;top:795.33px;width:79.5px;text-align:right;color:#6e7681;height:36px">23</div><div style="position:absolute;left:132.3px;top:795.33px;height:36px"><span style="color:#008000"># codelists</span></div><div style="position:absolute;left:0;top:831.33px;width:79.5px;text-align:right;color:#6e7681;height:36px">24</div><div style="position:absolute;left:132.3px;top:831.33px;height:36px"></div><div style="position:absolute;left:0;top:867.33px;width:79.5px;text-align:right;color:#6e7681;height:36px">25</div><div style="position:absolute;left:132.3px;top:867.33px;height:36px"><span style="color:#001080">ethnicity_codelist</span> <span style="color:#000000">=</span> <span style="color:#795e26">codelist_from_csv</span><span style="color:#0431fa">(</span></div><div style="position:absolute;left:0;top:903.33px;width:79.5px;text-align:right;color:#6e7681;height:36px">26</div><div style="position:absolute;left:132.3px;top:903.33px;height:36px">    <span style="color:#a31515">&quot;codelists/opensafely<span class="hy">-</span>ethnicity.csv&quot;</span><span style="color:#3b3b3b">,</span></div><div style="position:absolute;left:0;top:939.33px;width:79.5px;text-align:right;color:#6e7681;height:36px">27</div><div style="position:absolute;left:132.3px;top:939.33px;height:36px">    <span style="color:#001080">column</span><span style="color:#000000">=</span><span style="color:#a31515">&quot;Code&quot;</span><span style="color:#3b3b3b">,</span></div><div style="position:absolute;left:0;top:975.33px;width:79.5px;text-align:right;color:#6e7681;height:36px">28</div><div style="position:absolute;left:132.3px;top:975.33px;height:36px">    <span style="color:#001080">category_column</span><span style="color:#000000">=</span><span style="color:#a31515">&quot;Grouping_6&quot;</span><span style="color:#3b3b3b">,</span></div><div style="position:absolute;left:0;top:1011.33px;width:79.5px;text-align:right;color:#6e7681;height:36px">29</div><div style="position:absolute;left:132.3px;top:1011.33px;height:36px"><span style="color:#0431fa">)</span></div><div style="position:absolute;left:0;top:1047.33px;width:79.5px;text-align:right;color:#6e7681;height:36px">30</div><div style="position:absolute;left:132.3px;top:1047.33px;height:36px"></div><div style="position:absolute;left:0;top:1083.33px;width:79.5px;text-align:right;color:#6e7681;height:36px">31</div></div><div style="position:absolute;left:2620px;top:184px;width:1400px;transform-origin:0 0;transform:scale(0.16667);font:700 20px/24px 'Liberation Mono', monospace;white-space:pre;opacity:.95"><div style="height:24px"><span style="color:#af00db">from</span> <span style="color:#267f99">ehrql</span> <span style="color:#af00db">import</span> <span style="color:#0431fa">(</span></div><div style="height:24px">    <span style="color:#795e26">case</span><span style="color:#3b3b3b">,</span></div><div style="height:24px">    <span style="color:#795e26">codelist_from_csv</span><span style="color:#3b3b3b">,</span></div><div style="height:24px">    <span style="color:#795e26">create_dataset</span><span style="color:#3b3b3b">,</span></div><div style="height:24px">    <span style="color:#267f99">days</span><span style="color:#3b3b3b">,</span></div><div style="height:24px">    <span style="color:#267f99">when</span><span style="color:#3b3b3b">,</span></div><div style="height:24px"><span style="color:#0431fa">)</span></div><div style="height:24px"><span style="color:#af00db">from</span> <span style="color:#267f99">ehrql</span><span style="color:#3b3b3b">.</span><span style="color:#267f99">tables</span><span style="color:#3b3b3b">.</span><span style="color:#267f99">beta</span><span style="color:#3b3b3b">.</span><span style="color:#267f99">tpp</span> <span style="color:#af00db">import</span> <span style="color:#0431fa">(</span></div><div style="height:24px">    <span style="color:#267f99">addresses</span><span style="color:#3b3b3b">,</span></div><div style="height:24px">    <span style="color:#267f99">clinical_events</span><span style="color:#3b3b3b">,</span></div><div style="height:24px">    <span style="color:#267f99">hospital_admissions</span><span style="color:#3b3b3b">,</span></div><div style="height:24px">    <span style="color:#267f99">medications</span><span style="color:#3b3b3b">,</span></div><div style="height:24px">    <span style="color:#267f99">patients</span><span style="color:#3b3b3b">,</span></div><div style="height:24px">    <span style="color:#267f99">practice_registrations</span><span style="color:#3b3b3b">,</span></div><div style="height:24px"><span style="color:#0431fa">)</span></div><div style="height:24px"></div><div style="height:24px"><span style="color:#001080">index_date</span> <span style="color:#000000">=</span> <span style="color:#a31515">&quot;2023-10-01&quot;</span></div><div style="height:24px"></div><div style="height:24px"><span style="color:#001080">dataset</span> <span style="color:#000000">=</span> <span style="color:#795e26">create_dataset</span><span style="color:#0431fa">(</span><span style="color:#0431fa">)</span></div><div style="height:24px"></div><div style="height:24px"><span style="color:#001080">dataset</span><span style="color:#3b3b3b">.</span><span style="color:#795e26">configure_dummy_data</span><span style="color:#0431fa">(</span><span style="color:#001080">population_size</span><span style="color:#000000">=</span><span style="color:#098658">10</span><span style="color:#0431fa">)</span></div><div style="height:24px"></div><div style="height:24px"><span style="color:#008000"># codelists</span></div><div style="height:24px"></div><div style="height:24px"><span style="color:#001080">ethnicity_codelist</span> <span style="color:#000000">=</span> <span style="color:#795e26">codelist_from_csv</span><span style="color:#0431fa">(</span></div><div style="height:24px">    <span style="color:#a31515">&quot;codelists/opensafely-ethnicity.csv&quot;</span><span style="color:#3b3b3b">,</span></div><div style="height:24px">    <span style="color:#001080">column</span><span style="color:#000000">=</span><span style="color:#a31515">&quot;Code&quot;</span><span style="color:#3b3b3b">,</span></div><div style="height:24px">    <span style="color:#001080">category_column</span><span style="color:#000000">=</span><span style="color:#a31515">&quot;Grouping_6&quot;</span><span style="color:#3b3b3b">,</span></div><div style="height:24px"><span style="color:#0431fa">)</span></div><div style="height:24px"></div><div style="height:24px"><span style="color:#001080">asthma_inhaler_codelist</span> <span style="color:#000000">=</span> <span style="color:#795e26">codelist_from_csv</span><span style="color:#0431fa">(</span></div><div style="height:24px">    <span style="color:#a31515">&quot;codelists/opensafely-asthma-inhaler-salbutamol-medication.csv&quot;</span><span style="color:#3b3b3b">,</span></div><div style="height:24px">    <span style="color:#001080">column</span><span style="color:#000000">=</span><span style="color:#a31515">&quot;code&quot;</span><span style="color:#3b3b3b">,</span></div><div style="height:24px"><span style="color:#0431fa">)</span></div><div style="height:24px"></div><div style="height:24px"><span style="color:#008000"># population variables</span></div><div style="height:24px"></div><div style="height:24px"><span style="color:#001080">is_female_or_male</span> <span style="color:#000000">=</span> <span style="color:#267f99">patients</span><span style="color:#3b3b3b">.</span><span style="color:#001080">sex</span><span style="color:#3b3b3b">.</span><span style="color:#3b3b3b">is_in</span><span style="color:#0431fa">(</span><span style="color:#319331">[</span><span style="color:#a31515">&quot;female&quot;</span><span style="color:#3b3b3b">,</span> <span style="color:#a31515">&quot;male&quot;</span><span style="color:#319331">]</span><span style="color:#0431fa">)</span></div><div style="height:24px"></div><div style="height:24px"><span style="color:#001080">was_adult</span> <span style="color:#000000">=</span> <span style="color:#0431fa">(</span><span style="color:#267f99">patients</span><span style="color:#3b3b3b">.</span><span style="color:#795e26">age_on</span><span style="color:#319331">(</span><span style="color:#001080">index_date</span><span style="color:#319331">)</span> <span style="color:#000000">&gt;</span><span style="color:#000000">=</span> <span style="color:#098658">18</span><span style="color:#0431fa">)</span> <span style="color:#000000">&amp;</span> <span style="color:#0431fa">(</span></div><div style="height:24px">    <span style="color:#267f99">patients</span><span style="color:#3b3b3b">.</span><span style="color:#795e26">age_on</span><span style="color:#319331">(</span><span style="color:#001080">index_date</span><span style="color:#319331">)</span> <span style="color:#000000">&lt;</span><span style="color:#000000">=</span> <span style="color:#098658">110</span></div><div style="height:24px"><span style="color:#0431fa">)</span></div><div style="height:24px"></div><div style="height:24px"><span style="color:#001080">was_alive</span> <span style="color:#000000">=</span> <span style="color:#0431fa">(</span></div><div style="height:24px">    <span style="color:#267f99">patients</span><span style="color:#3b3b3b">.</span><span style="color:#001080">date_of_death</span><span style="color:#3b3b3b">.</span><span style="color:#3b3b3b">is_after</span><span style="color:#319331">(</span><span style="color:#001080">index_date</span><span style="color:#319331">)</span></div><div style="height:24px">    <span style="color:#000000">|</span> <span style="color:#267f99">patients</span><span style="color:#3b3b3b">.</span><span style="color:#001080">date_of_death</span><span style="color:#3b3b3b">.</span><span style="color:#3b3b3b">is_null</span><span style="color:#319331">(</span><span style="color:#319331">)</span></div><div style="height:24px"><span style="color:#0431fa">)</span></div><div style="height:24px"></div><div style="height:24px"><span style="color:#001080">was_registered</span> <span style="color:#000000">=</span> <span style="color:#267f99">practice_registrations</span><span style="color:#3b3b3b">.</span><span style="color:#795e26">for_patient_on</span><span style="color:#0431fa">(</span></div><div style="height:24px">    <span style="color:#001080">index_date</span></div><div style="height:24px"><span style="color:#0431fa">)</span><span style="color:#3b3b3b">.</span><span style="color:#3b3b3b">exists_for_patient</span><span style="color:#0431fa">(</span><span style="color:#0431fa">)</span></div><div style="height:24px"></div><div style="height:24px"><span style="color:#001080">dataset</span><span style="color:#3b3b3b">.</span><span style="color:#795e26">define_population</span><span style="color:#0431fa">(</span></div><div style="height:24px">    <span style="color:#001080">is_female_or_male</span></div><div style="height:24px">    <span style="color:#000000">&amp;</span> <span style="color:#001080">was_adult</span></div><div style="height:24px">    <span style="color:#000000">&amp;</span> <span style="color:#001080">was_alive</span></div><div style="height:24px">    <span style="color:#000000">&amp;</span> <span style="color:#001080">was_registered</span></div><div style="height:24px"><span style="color:#0431fa">)</span></div><div style="height:24px"></div><div style="height:24px"><span style="color:#008000"># demographic variables</span></div><div style="height:24px"></div><div style="height:24px"><span style="color:#001080">dataset</span><span style="color:#3b3b3b">.</span><span style="color:#001080">age</span> <span style="color:#000000">=</span> <span style="color:#267f99">patients</span><span style="color:#3b3b3b">.</span><span style="color:#795e26">age_on</span><span style="color:#0431fa">(</span><span style="color:#001080">index_date</span><span style="color:#0431fa">)</span></div><div style="height:24px"></div><div style="height:24px"><span style="color:#001080">dataset</span><span style="color:#3b3b3b">.</span><span style="color:#001080">sex</span> <span style="color:#000000">=</span> <span style="color:#267f99">patients</span><span style="color:#3b3b3b">.</span><span style="color:#001080">sex</span></div><div style="height:24px"></div><div style="height:24px"><span style="color:#001080">dataset</span><span style="color:#3b3b3b">.</span><span style="color:#001080">ethnicity</span> <span style="color:#000000">=</span> <span style="color:#0431fa">(</span></div><div style="height:24px">    <span style="color:#267f99">clinical_events</span><span style="color:#3b3b3b">.</span><span style="color:#795e26">where</span><span style="color:#319331">(</span></div><div style="height:24px">        <span style="color:#267f99">clinical_events</span><span style="color:#3b3b3b">.</span><span style="color:#001080">ctv3_code</span><span style="color:#3b3b3b">.</span><span style="color:#3b3b3b">is_in</span><span style="color:#7b3814">(</span><span style="color:#001080">ethnicity_codelist</span><span style="color:#7b3814">)</span></div><div style="height:24px">    <span style="color:#319331">)</span></div><div style="height:24px">    <span style="color:#3b3b3b">.</span><span style="color:#3b3b3b">sort_by</span><span style="color:#319331">(</span><span style="color:#267f99">clinical_events</span><span style="color:#3b3b3b">.</span><span style="color:#001080">date</span><span style="color:#319331">)</span></div><div style="height:24px">    <span style="color:#3b3b3b">.</span><span style="color:#3b3b3b">last_for_patient</span><span style="color:#319331">(</span><span style="color:#319331">)</span></div><div style="height:24px">    <span style="color:#3b3b3b">.</span><span style="color:#001080">ctv3_code</span><span style="color:#3b3b3b">.</span><span style="color:#3b3b3b">to_category</span><span style="color:#319331">(</span><span style="color:#001080">ethnicity_codelist</span><span style="color:#319331">)</span></div><div style="height:24px"><span style="color:#0431fa">)</span></div><div style="height:24px"></div><div style="height:24px"><span style="color:#001080">imd_rounded</span> <span style="color:#000000">=</span> <span style="color:#267f99">addresses</span><span style="color:#3b3b3b">.</span><span style="color:#795e26">for_patient_on</span><span style="color:#0431fa">(</span></div><div style="height:24px">    <span style="color:#001080">index_date</span></div><div style="height:24px"><span style="color:#0431fa">)</span><span style="color:#3b3b3b">.</span><span style="color:#3b3b3b">imd_rounded</span></div><div style="height:24px"><span style="color:#001080">max_imd</span> <span style="color:#000000">=</span> <span style="color:#098658">32844</span></div><div style="height:24px"><span style="color:#001080">dataset</span><span style="color:#3b3b3b">.</span><span style="color:#001080">imd_quintile</span> <span style="color:#000000">=</span> <span style="color:#795e26">case</span><span style="color:#0431fa">(</span></div><div style="height:24px">    <span style="color:#267f99">when</span><span style="color:#319331">(</span><span style="color:#001080">imd_rounded</span> <span style="color:#000000">&lt;</span> <span style="color:#267f99">int</span><span style="color:#7b3814">(</span><span style="color:#001080">max_imd</span> <span style="color:#000000">*</span> <span style="color:#098658">1</span> <span style="color:#000000">/</span> <span style="color:#098658">5</span><span style="color:#7b3814">)</span><span style="color:#319331">)</span><span style="color:#3b3b3b">.</span><span style="color:#795e26">then</span><span style="color:#319331">(</span><span style="color:#098658">1</span><span style="color:#319331">)</span><span style="color:#3b3b3b">,</span></div><div style="height:24px">    <span style="color:#267f99">when</span><span style="color:#319331">(</span><span style="color:#001080">imd_rounded</span> <span style="color:#000000">&lt;</span> <span style="color:#267f99">int</span><span style="color:#7b3814">(</span><span style="color:#001080">max_imd</span> <span style="color:#000000">*</span> <span style="color:#098658">2</span> <span style="color:#000000">/</span> <span style="color:#098658">5</span><span style="color:#7b3814">)</span><span style="color:#319331">)</span><span style="color:#3b3b3b">.</span><span style="color:#795e26">then</span><span style="color:#319331">(</span><span style="color:#098658">2</span><span style="color:#319331">)</span><span style="color:#3b3b3b">,</span></div><div style="height:24px">    <span style="color:#267f99">when</span><span style="color:#319331">(</span><span style="color:#001080">imd_rounded</span> <span style="color:#000000">&lt;</span> <span style="color:#267f99">int</span><span style="color:#7b3814">(</span><span style="color:#001080">max_imd</span> <span style="color:#000000">*</span> <span style="color:#098658">3</span> <span style="color:#000000">/</span> <span style="color:#098658">5</span><span style="color:#7b3814">)</span><span style="color:#319331">)</span><span style="color:#3b3b3b">.</span><span style="color:#795e26">then</span><span style="color:#319331">(</span><span style="color:#098658">3</span><span style="color:#319331">)</span><span style="color:#3b3b3b">,</span></div><div style="height:24px">    <span style="color:#267f99">when</span><span style="color:#319331">(</span><span style="color:#001080">imd_rounded</span> <span style="color:#000000">&lt;</span> <span style="color:#267f99">int</span><span style="color:#7b3814">(</span><span style="color:#001080">max_imd</span> <span style="color:#000000">*</span> <span style="color:#098658">4</span> <span style="color:#000000">/</span> <span style="color:#098658">5</span><span style="color:#7b3814">)</span><span style="color:#319331">)</span><span style="color:#3b3b3b">.</span><span style="color:#795e26">then</span><span style="color:#319331">(</span><span style="color:#098658">4</span><span style="color:#319331">)</span><span style="color:#3b3b3b">,</span></div><div style="height:24px">    <span style="color:#267f99">when</span><span style="color:#319331">(</span><span style="color:#001080">imd_rounded</span> <span style="color:#000000">&lt;</span><span style="color:#000000">=</span> <span style="color:#001080">max_imd</span><span style="color:#319331">)</span><span style="color:#3b3b3b">.</span><span style="color:#795e26">then</span><span style="color:#319331">(</span><span style="color:#098658">5</span><span style="color:#319331">)</span><span style="color:#3b3b3b">,</span></div><div style="height:24px"><span style="color:#0431fa">)</span></div><div style="height:24px"></div><div style="height:24px"><span style="color:#008000"># exposure variables</span></div><div style="height:24px"></div><div style="height:24px"><span style="color:#001080">dataset</span><span style="color:#3b3b3b">.</span><span style="color:#001080">num_asthma_inhaler_medications</span> <span style="color:#000000">=</span> <span style="color:#267f99">medications</span><span style="color:#3b3b3b">.</span><span style="color:#795e26">where</span><span style="color:#0431fa">(</span></div><div style="height:24px">    <span style="color:#267f99">medications</span><span style="color:#3b3b3b">.</span><span style="color:#001080">dmd_code</span><span style="color:#3b3b3b">.</span><span style="color:#3b3b3b">is_in</span><span style="color:#319331">(</span><span style="color:#001080">asthma_inhaler_codelist</span><span style="color:#319331">)</span></div><div style="height:24px">    <span style="color:#000000">&amp;</span> <span style="color:#267f99">medications</span><span style="color:#3b3b3b">.</span><span style="color:#001080">date</span><span style="color:#3b3b3b">.</span><span style="color:#3b3b3b">is_on_or_between</span><span style="color:#319331">(</span></div><div style="height:24px">        <span style="color:#001080">index_date</span> <span style="color:#000000">-</span> <span style="color:#267f99">days</span><span style="color:#7b3814">(</span><span style="color:#098658">30</span><span style="color:#7b3814">)</span><span style="color:#3b3b3b">,</span> <span style="color:#001080">index_date</span></div><div style="height:24px">    <span style="color:#319331">)</span></div><div style="height:24px"><span style="color:#0431fa">)</span><span style="color:#3b3b3b">.</span><span style="color:#3b3b3b">count_for_patient</span><span style="color:#0431fa">(</span><span style="color:#0431fa">)</span></div><div style="height:24px"></div><div style="height:24px"><span style="color:#008000"># outcome variables</span></div><div style="height:24px"></div><div style="height:24px"><span style="color:#001080">dataset</span><span style="color:#3b3b3b">.</span><span style="color:#001080">date_of_first_admission</span> <span style="color:#000000">=</span> <span style="color:#0431fa">(</span></div><div style="height:24px">    <span style="color:#267f99">hospital_admissions</span><span style="color:#3b3b3b">.</span><span style="color:#795e26">where</span><span style="color:#319331">(</span></div><div style="height:24px">        <span style="color:#267f99">hospital_admissions</span><span style="color:#3b3b3b">.</span><span style="color:#001080">admission_date</span><span style="color:#3b3b3b">.</span><span style="color:#3b3b3b">is_after</span><span style="color:#7b3814">(</span></div><div style="height:24px">            <span style="color:#001080">index_date</span></div><div style="height:24px">        <span style="color:#7b3814">)</span></div><div style="height:24px">    <span style="color:#319331">)</span></div><div style="height:24px">    <span style="color:#3b3b3b">.</span><span style="color:#3b3b3b">sort_by</span><span style="color:#319331">(</span><span style="color:#267f99">hospital_admissions</span><span style="color:#3b3b3b">.</span><span style="color:#001080">admission_date</span><span style="color:#319331">)</span></div><div style="height:24px">    <span style="color:#3b3b3b">.</span><span style="color:#3b3b3b">first_for_patient</span><span style="color:#319331">(</span><span style="color:#319331">)</span></div><div style="height:24px">    <span style="color:#3b3b3b">.</span><span style="color:#001080">admission_date</span></div><div style="height:24px"><span style="color:#0431fa">)</span></div><div style="height:24px"></div></div><div style="position:absolute;left:2852px;top:184px;width:1px;height:1090px;background:#e9e9e9;"></div><div style="position:absolute;left:2853px;top:184px;width:27px;height:4px;background:#424242;"></div><div style="position:absolute;left:718px;top:93px;width:24px;height:20px;border:2px solid #2c2c2c;border-radius:3px;background:#fff"></div><div style="position:absolute;left:722px;top:97px;width:16px;height:2px;border:2px solid #2c2c2c"></div><div style="position:absolute;left:722px;top:105px;width:8px;height:2px;background:#2c2c2c;"></div><div style="position:absolute;left:722px;top:111px;width:8px;height:2px;background:#2c2c2c;"></div><div style="position:absolute;left:734px;top:105px;width:4px;height:4px;border:2px solid #2c2c2c"></div><svg style="position:absolute;left:1121.5px;top:95px" width="21.2" height="21.2" viewBox="0 0 24 24"><path d="M14.25.18l.9.2.73.26.59.3.45.32.34.34.25.34.16.33.1.3.04.26.02.2-.01.13V8.5l-.05.63-.13.55-.21.46-.26.38-.3.31-.33.25-.35.19-.35.14-.33.1-.3.07-.26.04-.21.02H8.77l-.69.05-.59.14-.5.22-.41.27-.33.32-.27.35-.2.36-.15.37-.1.35-.07.32-.04.27-.02.21v3.06H3.17l-.21-.03-.28-.07-.32-.12-.35-.18-.36-.26-.36-.36-.35-.46-.32-.59-.28-.73-.21-.88-.14-1.05-.05-1.23.06-1.22.16-1.04.24-.87.32-.71.36-.57.4-.44.42-.33.42-.24.4-.16.36-.1.32-.05.24-.01h.16l.06.01h8.16v-.83H6.18l-.01-2.75-.02-.37.05-.34.11-.31.17-.28.25-.26.31-.23.38-.2.44-.18.51-.15.58-.12.64-.1.71-.06.77-.04.84-.02 1.27.05zm-6.3 1.98l-.23.33-.08.41.08.41.23.34.33.22.41.09.41-.09.33-.22.23-.34.08-.41-.08-.41-.23-.33-.33-.22-.41-.09-.41.09zm13.09 3.95l.28.06.32.12.35.18.36.27.36.35.35.47.32.59.28.73.21.88.14 1.04.05 1.23-.06 1.23-.16 1.04-.24.86-.32.71-.36.57-.4.45-.42.33-.42.24-.4.16-.36.09-.32.05-.24.02-.16-.01h-8.22v.82h5.84l.01 2.76.02.36-.05.34-.11.31-.17.29-.25.25-.31.24-.38.2-.44.17-.51.15-.58.13-.64.09-.71.07-.77.04-.84.01-1.27-.04-1.07-.14-.9-.2-.73-.25-.59-.3-.45-.33-.34-.34-.25-.34-.16-.33-.1-.3-.04-.25-.02-.2.01-.13v-5.34l.05-.64.13-.54.21-.46.26-.38.3-.32.33-.24.35-.2.35-.14.33-.1.3-.06.26-.04.21-.02.13-.01h5.84l.69-.05.59-.14.5-.21.41-.28.33-.32.27-.35.2-.36.15-.36.1-.35.07-.32.04-.28.02-.21V6.07h2.09l.14.01zm-6.47 14.25l-.23.33-.08.41.08.41.23.33.33.23.41.08.41-.08.33-.23.23-.33.08-.41-.08-.41-.23-.33-.33-.23-.41-.08-.41.08z" fill="#4a8bab"/></svg><svg style="position:absolute;left:737px;top:152px" width="21.2" height="21.2" viewBox="0 0 24 24"><path d="M14.25.18l.9.2.73.26.59.3.45.32.34.34.25.34.16.33.1.3.04.26.02.2-.01.13V8.5l-.05.63-.13.55-.21.46-.26.38-.3.31-.33.25-.35.19-.35.14-.33.1-.3.07-.26.04-.21.02H8.77l-.69.05-.59.14-.5.22-.41.27-.33.32-.27.35-.2.36-.15.37-.1.35-.07.32-.04.27-.02.21v3.06H3.17l-.21-.03-.28-.07-.32-.12-.35-.18-.36-.26-.36-.36-.35-.46-.32-.59-.28-.73-.21-.88-.14-1.05-.05-1.23.06-1.22.16-1.04.24-.87.32-.71.36-.57.4-.44.42-.33.42-.24.4-.16.36-.1.32-.05.24-.01h.16l.06.01h8.16v-.83H6.18l-.01-2.75-.02-.37.05-.34.11-.31.17-.28.25-.26.31-.23.38-.2.44-.18.51-.15.58-.12.64-.1.71-.06.77-.04.84-.02 1.27.05zm-6.3 1.98l-.23.33-.08.41.08.41.23.34.33.22.41.09.41-.09.33-.22.23-.34.08-.41-.08-.41-.23-.33-.33-.22-.41-.09-.41.09zm13.09 3.95l.28.06.32.12.35.18.36.27.36.35.35.47.32.59.28.73.21.88.14 1.04.05 1.23-.06 1.23-.16 1.04-.24.86-.32.71-.36.57-.4.45-.42.33-.42.24-.4.16-.36.09-.32.05-.24.02-.16-.01h-8.22v.82h5.84l.01 2.76.02.36-.05.34-.11.31-.17.29-.25.25-.31.24-.38.2-.44.17-.51.15-.58.13-.64.09-.71.07-.77.04-.84.01-1.27-.04-1.07-.14-.9-.2-.73-.25-.59-.3-.45-.33-.34-.34-.25-.34-.16-.33-.1-.3-.04-.25-.02-.2.01-.13v-5.34l.05-.64.13-.54.21-.46.26-.38.3-.32.33-.24.35-.2.35-.14.33-.1.3-.06.26-.04.21-.02.13-.01h5.84l.69-.05.59-.14.5-.21.41-.28.33-.32.27-.35.2-.36.15-.36.1-.35.07-.32.04-.28.02-.21V6.07h2.09l.14.01zm-6.47 14.25l-.23.33-.08.41.08.41.23.33.33.23.41.08.41-.08.33-.23.23-.33.08-.41-.08-.41-.23-.33-.33-.23-.41-.08-.41.08z" fill="#4a8bab"/></svg><svg style="position:absolute;left:0px;top:0px;" width="1" height="1" viewBox="0 0 1 1"><path d="M1463 97L1479 113M1479 97L1463 113" fill="none" stroke="#3b3b3b" stroke-width="2.2" stroke-linejoin="miter" stroke-linecap="butt"/></svg><svg style="position:absolute;left:0px;top:0px;" width="1" height="1" viewBox="0 0 1 1"><path d="M1039.5 152.5L1048.5 162L1039.5 171.5" fill="none" stroke="#616161" stroke-width="2" stroke-linejoin="miter" stroke-linecap="butt"/></svg><svg style="position:absolute;left:0px;top:0px;" width="1" height="1" viewBox="0 0 1 1"><path d="M2643.3 94.8V116.8L2660.3 105.8Z" fill="none" stroke="#3b3b3b" stroke-width="2.2" stroke-linejoin="miter" stroke-linecap="butt"/><path d="M2677 102.5L2684 109.2L2691 102.5" fill="none" stroke="#3b3b3b" stroke-width="1.8" stroke-linejoin="miter" stroke-linecap="butt"/><circle cx="2721" cy="96" r="3.9" fill="none" stroke="#3b3b3b" stroke-width="2.2" stroke-linejoin="miter" stroke-linecap="butt"/><circle cx="2739" cy="115.8" r="3.9" fill="none" stroke="#3b3b3b" stroke-width="2.2" stroke-linejoin="miter" stroke-linecap="butt"/><path d="M2721 100V110.5Q2721 115.8 2726.3 115.8H2731M2727 110.6L2731.8 115.8L2727 121" fill="none" stroke="#3b3b3b" stroke-width="2.2" stroke-linejoin="miter" stroke-linecap="butt"/><path d="M2739 111.8V101.3Q2739 96 2733.7 96H2729.5M2733.3 90.8L2728.5 96L2733.3 101.2" fill="none" stroke="#3b3b3b" stroke-width="2.2" stroke-linejoin="miter" stroke-linecap="butt"/><rect x="2771.1" y="92.1" width="23.8" height="23.8" rx="2.5" fill="none" stroke="#3b3b3b" stroke-width="2.2" stroke-linejoin="miter" stroke-linecap="butt"/><path d="M2783 92V116" fill="none" stroke="#3b3b3b" stroke-width="2.2" stroke-linejoin="miter" stroke-linecap="butt"/></svg><svg style="position:absolute;left:0px;top:0px;" width="1" height="1" viewBox="0 0 1 1"><circle cx="2824" cy="105" r="2.1" fill="#3b3b3b"/><circle cx="2834" cy="105" r="2.1" fill="#3b3b3b"/><circle cx="2844" cy="105" r="2.1" fill="#3b3b3b"/></svg><span style="position:absolute;left:737px;top:1302.38px;font:400 22px/22px 'Liberation Sans', sans-serif;color:#3b3b3b;white-space:pre;letter-spacing:-0.596px;-webkit-text-stroke:0.3px;">PROBLEMS</span><span style="position:absolute;left:904.5px;top:1302.38px;font:400 22px/22px 'Liberation Sans', sans-serif;color:#3b3b3b;white-space:pre;letter-spacing:-0.076px;-webkit-text-stroke:0.3px;">OUTPUT</span><span style="position:absolute;left:1044.5px;top:1302.38px;font:400 22px/22px 'Liberation Sans', sans-serif;color:#3b3b3b;white-space:pre;letter-spacing:-0.341px;-webkit-text-stroke:0.3px;">DEBUG CONSOLE</span><span style="position:absolute;left:1281px;top:1302.38px;font:400 22px/22px 'Liberation Sans', sans-serif;color:#3b3b3b;white-space:pre;letter-spacing:-0.156px;-webkit-text-stroke:0.3px;">TERMINAL</span><span style="position:absolute;left:1440px;top:1302.38px;font:400 22px/22px 'Liberation Sans', sans-serif;color:#3b3b3b;white-space:pre;letter-spacing:-0.478px;-webkit-text-stroke:0.3px;">PORTS</span><span style="position:absolute;left:1562px;top:1302.38px;font:400 22px/22px 'Liberation Sans', sans-serif;color:#3b3b3b;white-space:pre;letter-spacing:-0.041px;-webkit-text-stroke:0.3px;">COMMENTS</span><div style="position:absolute;left:1277px;top:1336px;width:119px;height:2px;background:#005fb8;"></div><span style="position:absolute;left:2462.5px;top:1301.65px;font:400 22.5px/22.5px 'Liberation Sans', sans-serif;color:#3b3b3b;white-space:pre;letter-spacing:-0.049px;-webkit-text-stroke:0.3px;">bash</span><div style="position:absolute;left:736px;top:1365.4px;width:2120px;height:394px;overflow:hidden;font:400 24px/30px 'Liberation Mono', monospace;letter-spacing:-0.400px;white-space:pre;-webkit-text-stroke:0.3px"><div style="height:30px"><span style="color:#107c10;">@iaindillingham</span><span style="color:#3b3b3b;">   </span><span style="color:#0451a5;font-weight:700;">/workspaces/ehrql<span class="ht">-</span>tutorial</span><span style="color:#0598bc;"> (</span><span style="color:#cd3131;font-weight:700;">main</span><span style="color:#0598bc;">)</span><span style="color:#3b3b3b;"> $ opensafely exec ehrql:v0 generate<span class="ht">-</span>dataset dataset_definition.py</span></div><div style="height:30px"><span style="color:#9d9d9d;">2023<span class="ht">-</span>10<span class="ht">-</span>24 13:46:55</span><span style="color:#3b3b3b;"> [</span><span style="color:#107c10;font-weight:700;">info</span><span style="color:#3b3b3b;">     ] </span><span style="color:#3b3b3b;font-weight:700;">Compiling dataset definition from dataset_definition.py</span></div><div style="height:30px"><span style="color:#9d9d9d;">2023<span class="ht">-</span>10<span class="ht">-</span>24 13:46:55</span><span style="color:#3b3b3b;"> [</span><span style="color:#107c10;font-weight:700;">info</span><span style="color:#3b3b3b;">     ] </span><span style="color:#3b3b3b;font-weight:700;">Generating dummy dataset</span></div><div style="height:30px"><span style="color:#9d9d9d;">2023<span class="ht">-</span>10<span class="ht">-</span>24 13:46:55</span><span style="color:#3b3b3b;"> [</span><span style="color:#107c10;font-weight:700;">info</span><span style="color:#3b3b3b;">     ] </span><span style="color:#3b3b3b;font-weight:700;">Attempting to generate 500 matching patients (random seed: BwRV3spP, timeout: 60s)</span></div><div style="height:30px"><span style="color:#9d9d9d;">2023<span class="ht">-</span>10<span class="ht">-</span>24 13:46:55</span><span style="color:#3b3b3b;"> [</span><span style="color:#107c10;font-weight:700;">info</span><span style="color:#3b3b3b;">     ] </span><span style="color:#3b3b3b;font-weight:700;">Use `dataset.configure_dummy_data(population_size=N)` to change number of patients generated</span></div><div style="height:30px"><span style="color:#9d9d9d;">2023<span class="ht">-</span>10<span class="ht">-</span>24 13:46:55</span><span style="color:#3b3b3b;"> [</span><span style="color:#107c10;font-weight:700;">info</span><span style="color:#3b3b3b;">     ] </span><span style="color:#3b3b3b;font-weight:700;">Building dataset and writing results</span></div><div style="height:30px"><span style="color:#3b3b3b;">patient_id,asthma_med_date,asthma_med_code</span></div><div style="height:30px"><span style="color:#3b3b3b;">1,2023<span class="ht">-</span>07<span class="ht">-</span>07,39113611000001102</span></div><div style="height:30px"><span style="color:#3b3b3b;">2,2023<span class="ht">-</span>07<span class="ht">-</span>19,39113611000001102</span></div><div style="height:30px"><span style="color:#3b3b3b;">3,2018<span class="ht">-</span>09<span class="ht">-</span>15,39113311000001107</span></div><div style="height:30px"><span style="color:#3b3b3b;">5,2004<span class="ht">-</span>11<span class="ht">-</span>18,39113611000001102</span></div><div style="height:30px"><span style="color:#3b3b3b;">6,2007<span class="ht">-</span>06<span class="ht">-</span>18,39113611000001102</span></div><div style="height:30px"><span style="color:#3b3b3b;">7,1949<span class="ht">-</span>12<span class="ht">-</span>11,39113311000001107</span></div></div><div style="position:absolute;left:710px;top:1369px;width:16px;height:16px;border-radius:8px;background:#1a85d6"></div><svg style="position:absolute;left:0px;top:0px;" width="1" height="1" viewBox="0 0 1 1"><path d="M961 1379H970M966.5 1373.6L972.3 1379L966.5 1384.4" fill="none" stroke="#3b3b3b" stroke-width="3" stroke-linejoin="miter"/></svg><div style="position:absolute;left:2860px;top:1362px;width:6px;height:6px;background:#bdbdbd;"></div><div style="position:absolute;left:2860px;top:1746px;width:6px;height:6px;background:#bdbdbd;"></div><div style="position:absolute;left:2860px;top:1549px;width:6px;height:12px;background:#1a85d6;"></div><svg style="position:absolute;left:0px;top:0px;" width="1" height="1" viewBox="0 0 1 1"><path d="M2437.6 1296L2450.5 1303.4V1317.8L2437.6 1325.6L2424.3 1317.8V1303.4Z" fill="#fff" stroke="#666" stroke-width="1"/><path d="M2437.3 1311.5L2450.5 1304V1317.8L2437.3 1325.6Z" fill="#3b3b3b"/><path d="M2441.5 1314.5Q2439.5 1315.5 2441 1317T2440.3 1320M2444 1319.8L2446.5 1318.3" fill="none" stroke="#fff" stroke-width="1.1"/><path d="M2546.9 1297.1V1322.9M2534 1310H2560" fill="none" stroke="#3b3b3b" stroke-width="2.2" stroke-linejoin="miter" stroke-linecap="butt"/><path d="M2572.6 1308.3L2579.9 1315L2587.2 1308.3" fill="none" stroke="#3b3b3b" stroke-width="1.8" stroke-linejoin="miter" stroke-linecap="butt"/><rect x="2615.4" y="1298.2" width="23.4" height="23.4" rx="2.5" fill="none" stroke="#3b3b3b" stroke-width="2.2" stroke-linejoin="miter" stroke-linecap="butt"/><path d="M2627 1298V1322" fill="none" stroke="#3b3b3b" stroke-width="2.2" stroke-linejoin="miter" stroke-linecap="butt"/><path d="M2666 1302H2688M2672.5 1302V1299.5Q2672.5 1297.5 2674.5 1297.5H2679.8Q2681.8 1297.5 2681.8 1299.5V1302M2669.2 1302L2669.5 1319.6Q2669.6 1321.6 2671.6 1321.6H2682.8Q2684.8 1321.6 2684.9 1319.6L2685.2 1302" fill="none" stroke="#3b3b3b" stroke-width="2.2" stroke-linejoin="miter" stroke-linecap="butt"/><path d="M2673 1304.8V1318.7M2677.1 1304.8V1318.7M2681.2 1304.8V1318.7" fill="none" stroke="#3b3b3b" stroke-width="2" stroke-linejoin="miter" stroke-linecap="butt"/><path d="M2772.4 1314L2782 1304.3L2791.7 1314" fill="none" stroke="#3b3b3b" stroke-width="2.2" stroke-linejoin="miter" stroke-linecap="butt"/><path d="M2825.7 1301.9L2842.3 1318.2M2842.3 1301.9L2825.7 1318.2" fill="none" stroke="#3b3b3b" stroke-width="2.2" stroke-linejoin="miter" stroke-linecap="butt"/></svg><svg style="position:absolute;left:0px;top:0px;" width="1" height="1" viewBox="0 0 1 1"><circle cx="2720" cy="1311" r="2.1" fill="#3b3b3b"/><circle cx="2730" cy="1311" r="2.1" fill="#3b3b3b"/><circle cx="2740" cy="1311" r="2.1" fill="#3b3b3b"/></svg><span style="position:absolute;left:55.5px;top:1766.34px;font:400 25px/25px 'Liberation Sans', sans-serif;color:#ffffff;white-space:pre;letter-spacing:0.150px;-webkit-text-stroke:0.3px;">Codespaces: expert space acorn</span><span style="position:absolute;left:494px;top:1766.84px;font:400 25px/25px 'Liberation Sans', sans-serif;color:#3b3b3b;white-space:pre;letter-spacing:-0.003px;-webkit-text-stroke:0.3px;">main*+</span><span style="position:absolute;left:621.5px;top:1766.84px;font:400 25px/25px 'Liberation Sans', sans-serif;color:#3b3b3b;white-space:pre;letter-spacing:-0.406px;-webkit-text-stroke:0.3px;">0</span><span style="position:absolute;left:664px;top:1766.84px;font:400 25px/25px 'Liberation Sans', sans-serif;color:#3b3b3b;white-space:pre;letter-spacing:-4.906px;-webkit-text-stroke:0.3px;">1</span><span style="position:absolute;left:758.5px;top:1766.84px;font:400 25px/25px 'Liberation Sans', sans-serif;color:#3b3b3b;white-space:pre;letter-spacing:-0.406px;-webkit-text-stroke:0.3px;">0</span><span style="position:absolute;left:815px;top:1766.84px;font:400 25px/25px 'Liberation Sans', sans-serif;color:#3b3b3b;white-space:pre;letter-spacing:-0.406px;-webkit-text-stroke:0.3px;">0</span><span style="position:absolute;left:896.5px;top:1766.84px;font:400 25px/25px 'Liberation Sans', sans-serif;color:#3b3b3b;white-space:pre;letter-spacing:-0.406px;-webkit-text-stroke:0.3px;">0</span><span style="position:absolute;left:1863px;top:1766.84px;font:400 25px/25px 'Liberation Sans', sans-serif;color:#3b3b3b;white-space:pre;letter-spacing:-0.175px;-webkit-text-stroke:0.3px;">Ln 1, Col 1</span><span style="position:absolute;left:2018px;top:1766.84px;font:400 25px/25px 'Liberation Sans', sans-serif;color:#3b3b3b;white-space:pre;letter-spacing:-0.132px;-webkit-text-stroke:0.3px;">Spaces: 4</span><span style="position:absolute;left:2162px;top:1766.84px;font:400 25px/25px 'Liberation Sans', sans-serif;color:#3b3b3b;white-space:pre;letter-spacing:0.034px;-webkit-text-stroke:0.3px;">UTF-8</span><span style="position:absolute;left:2267px;top:1766.84px;font:400 25px/25px 'Liberation Sans', sans-serif;color:#3b3b3b;white-space:pre;letter-spacing:-1.844px;-webkit-text-stroke:0.3px;">LF</span><span style="position:absolute;left:2362.5px;top:1766.84px;font:400 25px/25px 'Liberation Sans', sans-serif;color:#3b3b3b;white-space:pre;letter-spacing:0.026px;-webkit-text-stroke:0.3px;">Python</span><span style="position:absolute;left:2470.5px;top:1766.84px;font:400 25px/25px 'Liberation Sans', sans-serif;color:#3b3b3b;white-space:pre;letter-spacing:1.028px;-webkit-text-stroke:0.3px;">3.11.6 64-bit</span><span style="position:absolute;left:2654.5px;top:1766.84px;font:400 25px/25px 'Liberation Sans', sans-serif;color:#3b3b3b;white-space:pre;letter-spacing:-0.298px;-webkit-text-stroke:0.3px;">Layout: U.S.</span><svg style="position:absolute;left:0px;top:0px;" width="1" height="1" viewBox="0 0 1 1"><path d="M25.9 1773.2L33.4 1780.9L26 1788.6M41.8 1766.2L34.5 1773.8L41.8 1781.5" fill="none" stroke="#ffffff" stroke-width="1.9" stroke-linejoin="miter" stroke-linecap="butt"/><circle cx="466.2" cy="1768" r="3.4" fill="none" stroke="#3b3b3b" stroke-width="1.9" stroke-linejoin="miter" stroke-linecap="butt"/><circle cx="478.6" cy="1773.7" r="3.4" fill="none" stroke="#3b3b3b" stroke-width="1.9" stroke-linejoin="miter" stroke-linecap="butt"/><circle cx="466.2" cy="1788" r="3.4" fill="none" stroke="#3b3b3b" stroke-width="1.9" stroke-linejoin="miter" stroke-linecap="butt"/><path d="M466.2 1771.5V1784.5M478.6 1777.2Q478.6 1780.3 474.5 1780.5L470 1780.8Q466.2 1781.2 466.2 1784.3" fill="none" stroke="#3b3b3b" stroke-width="1.9" stroke-linejoin="miter" stroke-linecap="butt"/><path d="M590.6 1775.3A9.3 9.3 0 0 1 608.6 1776.5M608.4 1780.5A9.3 9.3 0 0 1 590.4 1779.3" fill="none" stroke="#3b3b3b" stroke-width="1.9" stroke-linejoin="miter" stroke-linecap="butt"/><path d="M603.9 1775.4L608.9 1780.2L612.8 1774.9M595.1 1780.4L590.1 1775.6L586.2 1780.9" fill="none" stroke="#3b3b3b" stroke-width="1.9" stroke-linejoin="miter" stroke-linecap="butt"/><path d="M644.6 1770.2V1786.2M638 1779.8L644.6 1786.4L651.2 1779.8" fill="none" stroke="#3b3b3b" stroke-width="2" stroke-linejoin="miter" stroke-linecap="butt"/><path d="M685.4 1787V1771M678.8 1777.4L685.4 1770.8L692 1777.4" fill="none" stroke="#3b3b3b" stroke-width="2" stroke-linejoin="miter" stroke-linecap="butt"/><circle cx="736.5" cy="1777.8" r="10.9" fill="none" stroke="#3b3b3b" stroke-width="1.8" stroke-linejoin="miter" stroke-linecap="butt"/><path d="M731.8 1773.2L741.3 1782.6M741.3 1773.2L731.8 1782.6" fill="none" stroke="#3b3b3b" stroke-width="1.8" stroke-linejoin="miter" stroke-linecap="butt"/><path d="M793.5 1768.4L803.6 1786.6H783.4Z" fill="none" stroke="#3b3b3b" stroke-width="1.8" stroke-linejoin="miter" stroke-linecap="butt"/><path d="M793.5 1774.8V1781.3M793.5 1783.2V1785.2" fill="none" stroke="#3b3b3b" stroke-width="1.8" stroke-linejoin="miter" stroke-linecap="butt"/><circle cx="876.2" cy="1773.6" r="2" fill="none" stroke="#3b3b3b" stroke-width="1.6" stroke-linejoin="miter" stroke-linecap="butt"/><path d="M875.4 1775.8L869.1 1789.4M877 1775.8L883.3 1789.4M873 1780.4H879.4M871 1785.1H881.4" fill="none" stroke="#3b3b3b" stroke-width="1.7" stroke-linejoin="miter" stroke-linecap="butt"/><path d="M872.6 1769.6A5.6 5.6 0 0 0 872.6 1777.6M879.8 1769.6A5.6 5.6 0 0 1 879.8 1777.6M869.4 1766.8A10 10 0 0 0 869.4 1780.4M883 1766.8A10 10 0 0 1 883 1780.4" fill="none" stroke="#3b3b3b" stroke-width="1.7" stroke-linejoin="miter" stroke-linecap="butt"/><path d="M2332 1768Q2328.1 1768.6 2328.1 1772.4V1775Q2328.1 1777.6 2325 1778Q2328.1 1778.4 2328.1 1781V1783.5Q2328.1 1787.3 2332 1787.9" fill="none" stroke="#3b3b3b" stroke-width="1.8" stroke-linejoin="miter" stroke-linecap="butt"/><path d="M2338.8 1768Q2342.2 1768.6 2342.2 1772.4V1774.6Q2342.2 1777.6 2346 1778.2" fill="none" stroke="#3b3b3b" stroke-width="1.8" stroke-linejoin="miter" stroke-linecap="butt"/><circle cx="2342.2" cy="1784.9" r="5" fill="#3b3b3b"/><path d="M2827.2 1785.8L2828.4 1780.5Q2828.2 1777 2828.2 1774.5A7.8 7.7 0 0 1 2843.8 1774.5Q2843.8 1777 2843.6 1780.5L2844.9 1785.8Z" fill="none" stroke="#3b3b3b" stroke-width="1.9" stroke-linejoin="round" stroke-linecap="butt"/><path d="M2833 1786.2A2.9 3.1 0 0 0 2838.8 1786.2" fill="none" stroke="#3b3b3b" stroke-width="1.8" stroke-linejoin="miter" stroke-linecap="butt"/></svg>
</body></html>
